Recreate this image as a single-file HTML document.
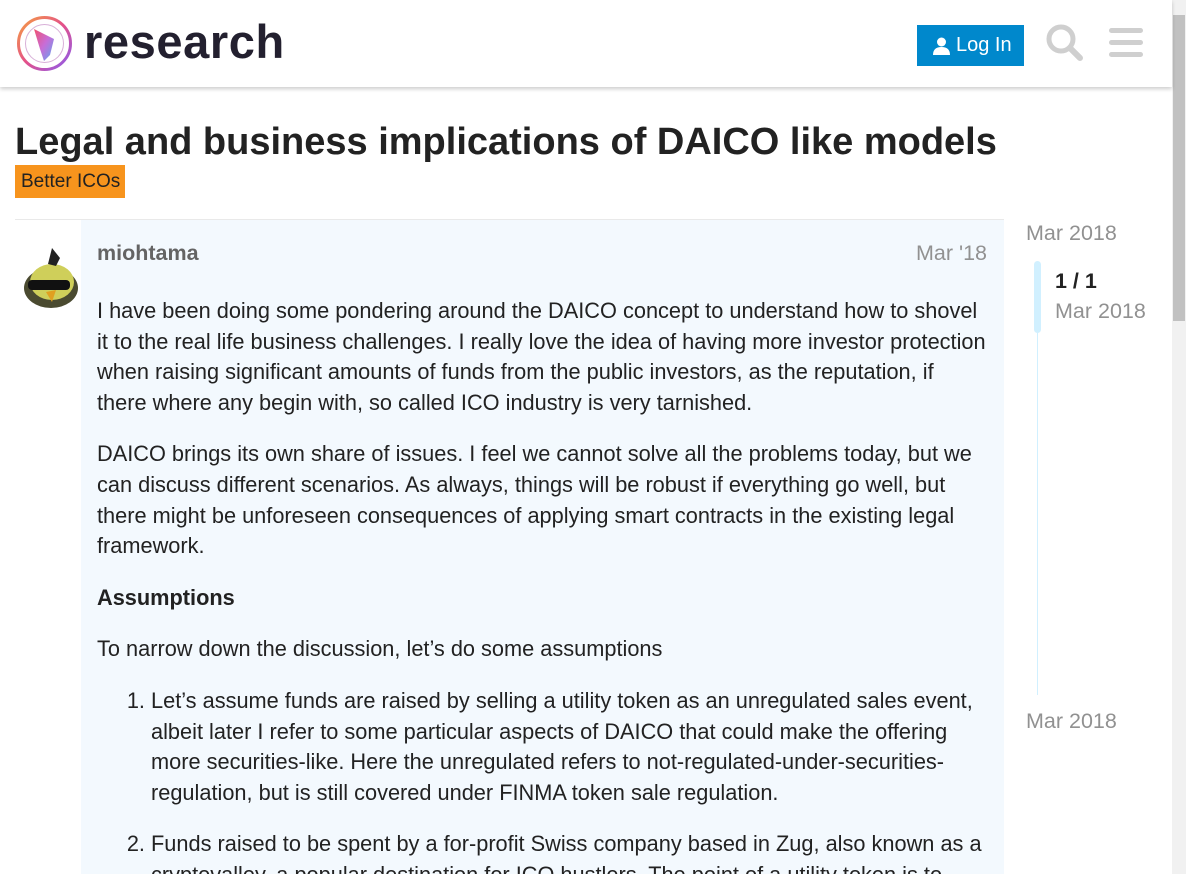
<!DOCTYPE html>
<html><head><meta charset="utf-8"><style>
*{margin:0;padding:0;box-sizing:border-box}
html,body{width:1186px;height:874px;overflow:hidden}
body{background:#fff;font-family:"Liberation Sans",sans-serif;color:#222;position:relative}
.hdr{position:absolute;left:0;top:0;width:1172px;height:87px;background:#fff;box-shadow:0 2px 4px rgba(0,0,0,.2);z-index:2}
.sb{position:absolute;left:1172px;top:0;width:14px;height:874px;background:#f1f1f1}
.thumb{position:absolute;left:1173px;top:15px;width:12px;height:306px;background:#c1c1c1}
.logo-t{position:absolute;left:84px;top:14px;font-size:47px;font-weight:bold;color:#23202f;letter-spacing:.6px}
.btn{position:absolute;left:917px;top:25px;width:107px;height:41px;background:#0088cc;color:#fff;font-size:20px;line-height:41px;padding-left:39px}
h1{position:absolute;left:15px;top:121px;font-size:38px;font-weight:bold;color:#222}
.cat{position:absolute;left:15px;top:165px;height:33px;width:110px;background:#f7941d;font-size:19px;line-height:33px;padding-left:6px;color:#222}
.line{position:absolute;left:15px;top:219px;width:989px;height:1px;background:#e9e9e9}
.post{position:absolute;left:81px;top:220px;width:923px;height:654px;background:#f3f9fe}
.name{position:absolute;left:97px;top:241px;font-size:21.5px;font-weight:bold;color:#646464}
.date{position:absolute;left:916px;top:241px;font-size:21.5px;color:#919191}
.body{position:absolute;left:97px;top:296px;width:893px;font-size:21.75px;line-height:30.6px;color:#222}
.body p{margin-bottom:21px}
.body ol{padding-left:54px}
.body li{margin-bottom:21px}
.tl{position:absolute;font-size:21.5px;color:#919191}
</style></head><body>
<div class="hdr">
<svg style="position:absolute;left:16px;top:15px" width="57" height="57" viewBox="0 0 57 57">
<defs><linearGradient id="g" x1="0" y1="0" x2="1" y2="1"><stop offset="0" stop-color="#f0506e"/><stop offset=".5" stop-color="#c86dd7"/><stop offset="1" stop-color="#5aa8f0"/></linearGradient>
<linearGradient id="g2" x1="0" y1="0" x2="1" y2="1"><stop offset="0" stop-color="#f5a040"/><stop offset=".5" stop-color="#e4508a"/><stop offset="1" stop-color="#8a5cf0"/></linearGradient></defs>
<circle cx="28.5" cy="28.5" r="26" fill="none" stroke="url(#g2)" stroke-width="3"/>
<circle cx="28.5" cy="28.5" r="19" fill="none" stroke="#d8b0d8" stroke-width="1"/>
<path d="M18 14 L38 24 L34 40 L28 46 L24 34 Z" fill="url(#g)"/>
</svg>
<div class="logo-t">research</div>
<div class="btn"><svg style="position:absolute;left:16px;top:12px" width="17" height="18" viewBox="0 0 17 18"><circle cx="8.5" cy="5" r="4.5" fill="#fff"/><path d="M0 18 Q0 10 8.5 10 Q17 10 17 18Z" fill="#fff"/></svg>Log In</div>
<svg style="position:absolute;left:1045px;top:23px" width="40" height="40" viewBox="0 0 40 40"><circle cx="16" cy="16" r="12" fill="none" stroke="#cfcfcf" stroke-width="5"/><path d="M25 25 L35 35" stroke="#cfcfcf" stroke-width="6" stroke-linecap="round"/></svg>
<svg style="position:absolute;left:1108px;top:27px" width="36" height="32" viewBox="0 0 36 32"><rect x="1" y="1" width="34" height="5" rx="2.5" fill="#cfcfcf"/><rect x="1" y="13" width="34" height="5" rx="2.5" fill="#cfcfcf"/><rect x="1" y="25" width="34" height="5" rx="2.5" fill="#cfcfcf"/></svg>
</div>
<div class="sb"></div><div class="thumb"></div>
<h1>Legal and business implications of DAICO like models</h1>
<div class="cat">Better ICOs</div>
<div class="line"></div>
<div class="post"></div>
<svg style="position:absolute;left:22px;top:244px" width="58" height="66" viewBox="0 0 58 66">
<ellipse cx="29" cy="44" rx="27" ry="20" fill="#4a4a30"/><ellipse cx="30" cy="38" rx="22" ry="18" fill="#cfcf5a"/>
<path d="M30 4 L38 14 L34 22 L26 20Z" fill="#222"/><rect x="6" y="36" width="42" height="10" rx="4" fill="#111"/><path d="M24 48 L34 46 L30 58Z" fill="#e0a020"/></svg>
<div class="name">miohtama</div>
<div class="date">Mar '18</div>
<div class="body">
<p>I have been doing some pondering around the DAICO concept to understand how to shovel<br>it to the real life business challenges. I really love the idea of having more investor protection when raising significant amounts of funds from the public investors, as the reputation, if<br>there where any begin with, so called ICO industry is very tarnished.</p>
<p>DAICO brings its own share of issues. I feel we cannot solve all the problems today, but we<br>can discuss different scenarios. As always, things will be robust if everything go well, but<br>there might be unforeseen consequences of applying smart contracts in the existing legal framework.</p>
<p><b>Assumptions</b></p>
<p>To narrow down the discussion, let’s do some assumptions</p>
<ol><li>Let’s assume funds are raised by selling a utility token as an unregulated sales event, albeit later I refer to some particular aspects of DAICO that could make the offering more securities-like. Here the unregulated refers to not-regulated-under-securities-regulation, but is still covered under FINMA token sale regulation.</li>
<li>Funds raised to be spent by a for-profit Swiss company based in Zug, also known as a cryptovalley, a popular destination for ICO hustlers. The point of a utility token is to</li></ol>
</div>
<div class="tl" style="left:1026px;top:221px">Mar 2018</div>
<div style="position:absolute;left:1034px;top:261px;width:7px;height:72px;background:#d1f0ff;border-radius:4px"></div>
<div style="position:absolute;left:1037px;top:333px;width:1px;height:362px;background:#d1f0ff"></div>
<div style="position:absolute;left:1055px;top:269px;font-size:21.5px;font-weight:bold;color:#222">1 / 1</div>
<div class="tl" style="left:1055px;top:299px">Mar 2018</div>
<div class="tl" style="left:1026px;top:709px">Mar 2018</div>
</body></html>
